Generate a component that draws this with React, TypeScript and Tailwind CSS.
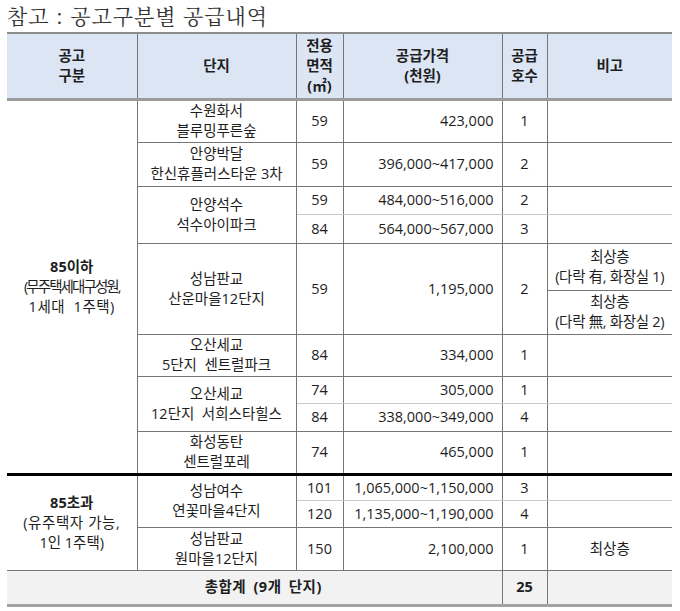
import React from 'react';

const FONT = "font-['Open_Sans','Noto_Sans_CJK_KR',sans-serif]";

// border colours
const DARK = 'border-[#767676]';
const LIGHT = 'border-b-[#c9c9c9]';

type CellProps = {
  children?: React.ReactNode;
  rowSpan?: number;
  colSpan?: number;
  className?: string;
};

const Td = ({ children, rowSpan, colSpan, className = '' }: CellProps) => (
  <td rowSpan={rowSpan} colSpan={colSpan} className={`p-0 align-middle leading-[20px] ${className}`}>
    {children}
  </td>
);

const Th = ({ children, className = '' }: CellProps) => (
  <th
    className={`p-0 align-middle font-bold leading-[20px] text-center bg-[#dce5f4] border-t-2 border-t-[#8c8c8c] border-b-[3px] border-b-[#9b9b9b] ${className}`}
  >
    {children}
  </th>
);

export default function App() {
  const sep = `border-r ${DARK}`;
  const main = `border-b ${DARK}`;
  const light = `border-b ${LIGHT}`;
  const thick = 'border-b-[3px] border-b-black';

  // one row of area / price / units / note, with an optional complex cell in front
  const row = (
    complex: React.ReactNode | null,
    cSpan: number,
    area: string,
    price: string,
    units: string,
    note: React.ReactNode,
    h: string,
    line: string,
    cLine: string = line,
  ) => (
    <tr className={h}>
      {complex !== null && (
        <Td rowSpan={cSpan} className={`text-center ${sep} ${cLine}`}>{complex}</Td>
      )}
      <Td className={`text-center ${sep} ${line}`}>{area}</Td>
      <Td className={`text-right pr-[8px] ${sep} ${line}`}>{price}</Td>
      <Td className={`text-center ${sep} ${line}`}>{units}</Td>
      <Td className={`text-center ${line}`}>{note}</Td>
    </tr>
  );

  return (
    <div className={`w-[680px] h-[611px] bg-white text-[14.5px] text-[#1e1e1e] ${FONT}`}>
      <div className="pl-[7px] h-[32px] text-[21px] leading-[30px] tracking-[1px] text-[#333] whitespace-nowrap font-['Noto_Serif_CJK_KR','Liberation_Serif',serif]">
        참고 : 공고구분별 공급내역
      </div>
      <table className="ml-[7px] w-[665px] table-fixed border-collapse">
        <colgroup>
          <col className="w-[130px]" />
          <col className="w-[159px]" />
          <col className="w-[47px]" />
          <col className="w-[159px]" />
          <col className="w-[45px]" />
          <col className="w-[125px]" />
        </colgroup>
        <thead>
          <tr className="h-[66px]">
            <Th className={sep}>공고<br />구분</Th>
            <Th className={sep}>단지</Th>
            <Th className={sep}>전용<br />면적<br />(㎡)</Th>
            <Th className={sep}>공급가격<br />(천원)</Th>
            <Th className={sep}>공급<br />호수</Th>
            <Th>비고</Th>
          </tr>
        </thead>
        <tbody>
          <tr className="h-[43px]">
            <Td rowSpan={10} className={`text-center ${sep} ${thick}`}>
              <div className="font-bold">85이하</div>
              <div className="whitespace-nowrap tracking-[-1.9px]">(무주택세대구성원,</div>
              <div className="tracking-[0.5px] whitespace-nowrap">1세대&nbsp; 1주택)</div>
            </Td>
            <Td className={`text-center ${sep} ${main}`}>수원화서<br />블루밍푸른숲</Td>
            <Td className={`text-center ${sep} ${main}`}>59</Td>
            <Td className={`text-right pr-[8px] ${sep} ${main}`}>423,000</Td>
            <Td className={`text-center ${sep} ${main}`}>1</Td>
            <Td className={main}></Td>
          </tr>
          {row(<>안양박달<br /><span className="whitespace-nowrap">한신휴플러스타운 3차</span></>, 1, '59', '396,000~417,000', '2', '', 'h-[44px]', main)}
          {row(<>안양석수<br />석수아이파크</>, 2, '59', '484,000~516,000', '2', '', 'h-[28px]', light, main)}
          {row(null, 1, '84', '564,000~567,000', '3', '', 'h-[29px]', main)}

          <tr className="h-[47px]">
            <Td rowSpan={2} className={`text-center ${sep} ${main}`}>성남판교<br />산운마을12단지</Td>
            <Td rowSpan={2} className={`text-center ${sep} ${main}`}>59</Td>
            <Td rowSpan={2} className={`text-right pr-[8px] ${sep} ${main}`}>1,195,000</Td>
            <Td rowSpan={2} className={`text-center ${sep} ${main}`}>2</Td>
            <Td className={`text-center whitespace-nowrap tracking-[-0.3px] ${main}`}>최상층<br />(다락 有, 화장실 1)</Td>
          </tr>
          <tr className="h-[44px]">
            <Td className={`text-center whitespace-nowrap tracking-[-0.3px] ${main}`}>최상층<br />(다락 無, 화장실 2)</Td>
          </tr>

          {row(<>오산세교<br />5단지&nbsp; 센트럴파크</>, 1, '84', '334,000', '1', '', 'h-[42px]', main)}
          {row(<>오산세교<br /><span className="whitespace-nowrap">12단지&nbsp; 서희스타힐스</span></>, 2, '74', '305,000', '1', '', 'h-[27px]', light, main)}
          {row(null, 1, '84', '338,000~349,000', '4', '', 'h-[28px]', main)}

          <tr className="h-[43px]">
            <Td className={`text-center ${sep} ${thick}`}>화성동탄<br />센트럴포레</Td>
            <Td className={`text-center ${sep} ${thick}`}>74</Td>
            <Td className={`text-right pr-[8px] ${sep} ${thick}`}>465,000</Td>
            <Td className={`text-center ${sep} ${thick}`}>1</Td>
            <Td className={thick}></Td>
          </tr>

          <tr className="h-[26px]">
            <Td rowSpan={3} className={`text-center ${sep} ${main}`}>
              <div className="font-bold">85초과</div>
              <div className="whitespace-nowrap tracking-[0.6px]">(유주택자 가능,</div>
              <div>1인 1주택)</div>
            </Td>
            <Td rowSpan={2} className={`text-center ${sep} ${main}`}>성남여수<br />연꽃마을4단지</Td>
            <Td className={`text-center ${sep} ${light}`}>101</Td>
            <Td className={`text-right pr-[8px] whitespace-nowrap ${sep} ${light}`}>1,065,000~1,150,000</Td>
            <Td className={`text-center ${sep} ${light}`}>3</Td>
            <Td className={light}></Td>
          </tr>
          {row(null, 1, '120', '1,135,000~1,190,000', '4', '', 'h-[27px]', main)}
          {row(<>성남판교<br />원마을12단지</>, 1, '150', '2,100,000', '1', '최상층', 'h-[43px]', main)}

          <tr className="h-[35px] bg-[#f2f2f2]">
            <Td colSpan={4} className={`text-center font-bold ${sep} border-b-[3px] border-b-[#a3a3a3]`}>
              <span className="ml-[18px] tracking-[0.5px] [word-spacing:3px]">총합계 (9개 단지)</span>
            </Td>
            <Td className={`text-center font-bold ${sep} border-b-[3px] border-b-[#a3a3a3]`}>25</Td>
            <Td className="border-b-[3px] border-b-[#a3a3a3]"></Td>
          </tr>
        </tbody>
      </table>
    </div>
  );
}
